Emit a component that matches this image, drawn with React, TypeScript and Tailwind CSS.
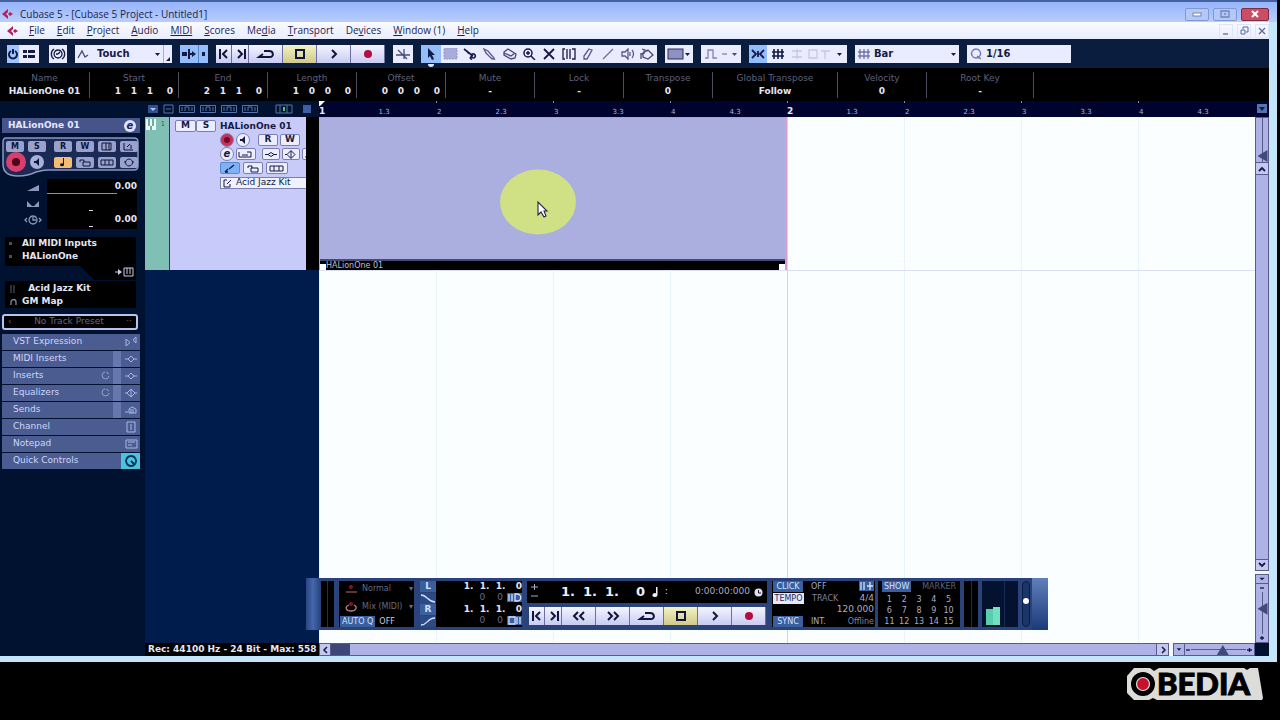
import React, { useState } from 'react';
import clsx from 'clsx';

type GlyphProps = {
  d?: string;
  fill?: string;
  w?: number;
  h?: number;
  sw?: number;
  className?: string;
  children?: React.ReactNode;
};

// Small line drawing, `d` is stroked and `fill` is filled
const Glyph: React.FC<GlyphProps> = ({ d, fill, w = 16, h = 12, sw = 1.3, className, children }) => (
  <svg width={w} height={h} viewBox={`0 0 ${w} ${h}`} className={clsx('shrink-0', className)} aria-hidden="true">
    {d && <path d={d} fill="none" stroke="currentColor" strokeWidth={sw} />}
    {fill && <path d={fill} fill="currentColor" />}
    {children}
  </svg>
);

const CubaseLogo: React.FC = () => (
  <Glyph w={12} h={10} className="text-[#b5205e]" fill="M6 0 0 5l6 5V7L4 5l2-2zM8 3l3 2-3 2-2-2z" />
);

const menus = [
  ['', 'F', 'ile'],
  ['', 'E', 'dit'],
  ['', 'P', 'roject'],
  ['', 'A', 'udio'],
  ['', 'MIDI', ''],
  ['', 'S', 'cores'],
  ['Me', 'd', 'ia'],
  ['', 'T', 'ransport'],
  ['De', 'v', 'ices'],
  ['', 'W', 'indow (1)'],
  ['', 'H', 'elp'],
];

const paths = {
  start: 'M3 1v10M10 2 6 6l4 4',
  end: 'M11 1v10M4 2l4 4-4 4',
  cycle: 'M7 6 3 9h11c4 0 4-6-1-6H8',
  play: 'M6 2l4 4-4 4',
  rewind: 'M7 2 3 6l4 4M13 2 9 6l4 4',
  forward: 'M3 2l4 4-4 4M9 2l4 4-4 4',
};

const TransportKeys: React.FC<{ winding?: boolean }> = ({ winding = false }) => {
  const key = 'flex h-[18px] items-center justify-center border-r border-[#6b70a0] bg-linear-to-b from-[#f4f5ff] to-[#c9cbf2] text-[#10163a]';
  return (
    <div className="flex">
      <button aria-label="Previous marker" className={clsx(key, 'w-4')}><Glyph w={13} d={paths.start} sw={2} /></button>
      <button aria-label="Next marker" className={clsx(key, 'w-[17px]')}><Glyph w={13} d={paths.end} sw={2} /></button>
      {winding && (
        <>
          <button aria-label="Rewind" className={clsx(key, 'w-[34px]')}><Glyph d={paths.rewind} sw={2} /></button>
          <button aria-label="Forward" className={clsx(key, 'w-[34px]')}><Glyph d={paths.forward} sw={2} /></button>
        </>
      )}
      <button aria-label="Cycle" className={clsx(key, 'w-[34px]')}><Glyph w={20} d={paths.cycle} sw={2} /></button>
      <button aria-label="Stop" className="flex h-[18px] w-[34px] items-center justify-center border-r border-[#6b70a0] bg-linear-to-b from-[#f5f2c4] to-[#cfc98c] text-[#10163a]">
        <Glyph d="M4 2h8v8H4z" sw={2} />
      </button>
      <button aria-label="Play" className={clsx(key, 'w-[34px]')}><Glyph d={paths.play} sw={2} /></button>
      <button aria-label="Record" className={clsx(key, 'w-[34px]')}>
        <Glyph><circle cx="8" cy="6" r="4" fill="#b00f3f" /></Glyph>
      </button>
    </div>
  );
};

const tools = [
  { name: 'Range Selection', el: <Glyph><rect x="1" y="0" width="13" height="11" fill="#a9abd8" stroke="#9599c8" strokeDasharray="2 1" /></Glyph> },
  { name: 'Split', el: <Glyph d="M2 1l9 7M5 4l5 3M12 6a2 2 0 1 0 1 3 2 2 0 0 0-1-3M9 9a1 1 0 1 0 1 2" sw={1.6} /> },
  { name: 'Glue', el: <Glyph className="text-[#555a88]" d="M2 1l4 2 6 7-2 1-6-6zM11 10l2 2" /> },
  { name: 'Erase', el: <Glyph className="text-[#454a78]" d="M2 4l4-3 8 5-1 4-4 1-7-4zM2 5l7 3 4-3" /> },
  { name: 'Zoom', el: <Glyph d="M11 5a4 4 0 1 1-8 0 4 4 0 0 1 8 0M10 8l4 4M5 5h4M7 3v4" sw={1.5} /> },
  { name: 'Mute', el: <Glyph d="M3 1l10 10M13 1 3 11" sw={1.8} /> },
  { name: 'Time Warp', el: <Glyph d="M4 1H2v10h2M6 1v10M9 1v10M11 1h3v10h-3" /> },
  { name: 'Draw', el: <Glyph className="text-[#555a88]" d="M9 1l3 1-5 9-3 0 0-3z" /> },
  { name: 'Line', el: <Glyph className="text-[#6a6f9c]" d="M3 11 13 1" /> },
  { name: 'Play Tool', el: <Glyph className="text-[#555a88]" d="M2 4h3l3-3v10L5 8H2zM10 4v4M12 2c2 2 2 6 0 8" /> },
  { name: 'Color', el: <Glyph className="text-[#454a78]" d="M4 5l5-3 5 5-5 4-5-2zM3 1l6 2M5 1v5M2 5v6M2 6l3-1" /> },
];

const Toolbar: React.FC = () => {
  const [tool, setTool] = useState('Object Selection');
  return (
    <div className="flex h-[29px] items-center gap-2 bg-[#0b1d3f] pl-[7px] text-[#151b45]">
      <div className="mr-0.5 flex h-[18px] bg-[#e9ebff]">
        <button aria-label="Activate project" className="flex w-3 items-center justify-center bg-[#9fc4ff]">
          <Glyph w={12} d="M4 3a4 4 0 1 0 4 0M6 1v5" sw={2} />
        </button>
        <button aria-label="Delay compensation" className="flex w-5 items-center justify-center">
          <Glyph fill="M2 2h4v3H2zM7 2h7v3H7zM2 7h4v3H2zM7 7h7v3H7z" />
        </button>
      </div>
      <button aria-label="Setup" className="flex h-[18px] w-[18px] items-center justify-center bg-[#e9ebff]">
        <Glyph d="M4 1a6 6 0 0 0 0 10M12 1a6 6 0 0 1 0 10M8 2a4 4 0 1 0 .1 0M8 6l2-2M6 6h2" />
      </button>
      <div className="flex h-[18px] bg-[#e9ebff]">
        <label className="flex w-[88px] items-center pl-0.5">
          <Glyph className="text-[#454a78]" d="M1 10l4-7 3 6 3-2" />
          <select aria-label="Automation mode" className="min-w-0 flex-1 appearance-none pl-1 font-[DejaVu_Sans,sans-serif] text-[10px] leading-3 font-bold outline-none">
            <option>Touch</option>
            <option>Latch</option>
          </select>
          <Glyph w={10} fill="M2 5h5L4.500 8z" />
        </label>
        <button aria-label="Automation panel" className="flex w-[9px] items-end border-l border-[#a9addb]"><Glyph w={8} h={8} fill="M6 2v4H2z" /></button>
      </div>
      <div className="flex h-[18px] bg-[#93bdfb]">
        <button aria-label="Auto scroll" className="flex w-[18px] items-center justify-center"><Glyph fill="M1 4h5v4H1zM7 1h2v10H7zM9 5h2V3l4 3-4 3V7H9z" /></button>
        <button aria-label="Suspend scroll" className="flex w-2.5 items-center justify-center border-l border-[#5d83c4]"><Glyph w={8} fill="M2 4h3v4H2z" /></button>
      </div>
      <TransportKeys />
      <button aria-label="Crosshair" className="flex h-[18px] w-5 items-center justify-center bg-[#e9ebff]">
        <Glyph className="text-[#454a78]" d="M1 7h14M9 1v10M3 2l9 9" />
      </button>
      <div className="flex h-[18px] w-[236px] bg-[#e9ebff]">
        <button
          aria-label="Object Selection"
          onClick={() => setTool('Object Selection')}
          className={clsx('relative flex flex-1 items-center justify-center', tool === 'Object Selection' && 'bg-[#93bdfb]')}
        >
          <Glyph fill="M5 0v10l2-2 2 4 2-1-2-4h3z" />
          <span className="absolute -bottom-1 h-[3px] w-1.5 rounded-b-full bg-[#dfe4ff]" />
        </button>
        {tools.map(t => (
          <button key={t.name} aria-label={t.name} onClick={() => setTool(t.name)} className={clsx('flex flex-1 items-center justify-center', tool === t.name && 'bg-[#93bdfb]')}>
            {t.el}
          </button>
        ))}
      </div>
      <button aria-label="Color menu" className="flex h-[18px] w-7 items-center justify-center bg-[#e9ebff]">
        <Glyph w={18}><rect x="1" y="1" width="15" height="10" fill="#8e92c2" stroke="#2a2f5c" /></Glyph>
        <Glyph w={6} fill="M0 5h5L2.500 8z" />
      </button>
      <button aria-label="Nudge" className="flex h-[18px] w-10 items-center justify-center gap-1 bg-[#e9ebff] text-[#8084b0]">
        <Glyph w={14} d="M1 10h3V2h5v8h4" />
        <Glyph w={6} d="M0 6h5" />
        <Glyph w={6} className="text-[#454a78]" fill="M0 5h5L2.500 8z" />
      </button>
      <div className="flex h-[18px] w-[98px] bg-[#e9ebff]">
        <button aria-label="Snap" className="flex w-[18px] items-center justify-center bg-[#93bdfb]"><Glyph d="M2 2l4 4-4 4M14 2l-4 4 4 4M8 3v6" sw={1.8} /></button>
        <button aria-label="Snap type" className="flex flex-1 items-center justify-between px-1">
          <Glyph d="M3 1v10M7 1v10M11 1v10M1 4h12M1 8h12" sw={1.6} />
          <Glyph w={42} className="text-[#c4c7e6]" d="M1 3h10M1 9h10M6 1v10M18 2h8v8h-8zM30 3h9M34 3v8" />
          <Glyph w={6} fill="M0 5h5L2.500 8z" />
        </button>
      </div>
      <label className="flex h-[18px] w-[104px] items-center bg-[#e9ebff] pl-0.5">
        <Glyph className="text-[#7175a8]" d="M3 1v10M7 1v10M11 1v10M1 4h12M1 8h12" />
        <select aria-label="Grid type" className="min-w-0 flex-1 appearance-none pl-px font-[DejaVu_Sans,sans-serif] text-[10px] leading-3 font-bold outline-none">
          <option>Bar</option>
          <option>Beat</option>
        </select>
        <Glyph w={10} fill="M2 5h5L4.500 8z" />
      </label>
      <label className="flex h-[18px] w-[104px] items-center bg-[#e9ebff] pl-0.5">
        <Glyph className="text-[#7175a8]" d="M7 1a4.500 4.500 0 1 0 .1 0M8 8l4 3" />
        <select aria-label="Quantize" className="min-w-0 flex-1 appearance-none pl-px font-[DejaVu_Sans,sans-serif] text-[10px] leading-3 font-bold outline-none">
          <option>1/16</option>
          <option>1/8</option>
        </select>
      </label>
    </div>
  );
};

const infoCells = [
  { label: 'Name', value: 'HALionOne 01', width: 'w-[90px]' },
  { label: 'Start', value: '1 1 1 0', width: 'w-[89px]' },
  { label: 'End', value: '2 1 1 0', width: 'w-[89px]' },
  { label: 'Length', value: '1 0 0 0', width: 'w-[89px]' },
  { label: 'Offset', value: '0 0 0 0', width: 'w-[89px]' },
  { label: 'Mute', value: '-', width: 'w-[89px]' },
  { label: 'Lock', value: '-', width: 'w-[89px]' },
  { label: 'Transpose', value: '0', width: 'w-[89px]' },
  { label: 'Global Transpose', value: 'Follow', width: 'w-[125px]' },
  { label: 'Velocity', value: '0', width: 'w-[89px]' },
  { label: 'Root Key', value: '-', width: 'w-[107px]' },
];

const InfoLine: React.FC = () => (
  <dl className="flex h-[33px] items-start bg-black pt-1">
    {infoCells.map(cell => (
      <div key={cell.label} className={clsx('flex h-[26px] flex-col border-r border-[#4b4d60] text-[9px] whitespace-nowrap', cell.width)}>
        <dt className="text-center leading-3 text-[#5f617a]">{cell.label}</dt>
        {/^\d \d/.test(cell.value) ? (
          <dd className="flex justify-end leading-[14px] font-bold text-[#e4e5f5]">
            {cell.value.split(' ').map((n, i) => (
              <span key={i} className={clsx('w-4 text-center', i === 3 && 'ml-1')}>{n}</span>
            ))}
          </dd>
        ) : (
          <dd className="text-center leading-[14px] font-bold text-[#e4e5f5]">{cell.value}</dd>
        )}
      </div>
    ))}
  </dl>
);

const tabs = [
  { name: 'VST Expression', icon: 'M2 3v7l4-3.500zM12 1v6L9 4z' },
  { name: 'MIDI Inserts', icon: 'M1 6h3M4 6l3-3 3 3-3 3zM10 6h3', slot: true },
  { name: 'Inserts', icon: 'M1 6h3M4 6l3-3 3 3-3 3zM10 6h3', slot: true, bypass: true },
  { name: 'Equalizers', icon: 'M1 6h2M3 6l4-4 4 4-4 4zM11 6h2M7 2v8', slot: true, bypass: true },
  { name: 'Sends', icon: 'M1 8h3M5 9V5l3-2 4 2v4zM7 5v4M9 5v4', slot: true },
  { name: 'Channel', icon: 'M3 1h8v10H3zM7 3v6' },
  { name: 'Notepad', icon: 'M2 2h11v8H2zM4 4h7M4 7h4' },
  { name: 'Quick Controls', icon: 'M7 1a5 5 0 1 0 .1 0M7 6l3 3', active: true },
];

const smallKey = 'flex h-[11px] items-center justify-center rounded-[2px] bg-[#98a2cc] text-[8px] font-bold text-[#10163a]';

const Inspector: React.FC = () => (
  <aside className="flex w-[145px] shrink-0 flex-col bg-[#00122f] pt-[17px] pr-[5px] pl-0.5">
    <header className="flex h-[15px] items-center justify-between bg-[#465489] pr-1 pl-1.5 text-[9px] font-bold text-[#e4e8ff]">
      HALionOne 01
      <button aria-label="Edit instrument" className="flex size-3 items-center justify-center rounded-full bg-[#dfe3ff] text-[10px] leading-none text-[#1c2858] italic">e</button>
    </header>

    <div className="relative mt-1 h-10">
      <svg className="absolute inset-0" width="138" height="40" viewBox="0 0 138 40" aria-hidden="true">
        <path d="M4 1h128q4 0 4 4v24q0 4-4 4H46q-5 0-12 2-8 4-18 4Q1 39 1 27V5q0-4 3-4z" fill="#1b2a55" stroke="#8a96c4" strokeWidth="1.500" />
      </svg>
      <div className="relative flex gap-1 pt-1 pl-1">
        <button className={clsx(smallKey, 'w-[18px]')}>M</button>
        <button className={clsx(smallKey, 'w-[18px]')}>S</button>
        <button className={clsx(smallKey, 'ml-1 w-[18px]')}>R</button>
        <button className={clsx(smallKey, 'w-[18px]')}>W</button>
        <button aria-label="Show layer" className={clsx(smallKey, 'w-[18px]')}><Glyph w={14} h={9} d="M2 1h9v7H2zM6 1v7M9 1v7" sw={1} /></button>
        <button aria-label="Input transformer" className={clsx(smallKey, 'w-[18px]')}><Glyph w={14} h={9} d="M2 1v7h9M5 5l3-3M9 3v4" sw={1} /></button>
      </div>
      <div className="relative flex items-center gap-1 pl-1">
        <button aria-label="Record enable" className="flex size-5 items-center justify-center rounded-full bg-[#d93f6c]">
          <span className="size-2 rounded-full bg-[#4d0218]" />
        </button>
        <button aria-label="Monitor" className="flex size-3.5 items-center justify-center rounded-full bg-[#a7b0d8] text-[#10163a]"><Glyph w={8} h={8} fill="M1 3h2l3-3v8L3 5H1z" /></button>
        <button aria-label="Toggle timebase" className="ml-1.5 flex h-[11px] w-[18px] items-center justify-center rounded-[2px] bg-[#f3bd78] text-[#10163a]"><Glyph w={8} h={9} fill="M4 0h1v7a2 1.500 0 1 1-1-1.500z" /></button>
        <button aria-label="Lock" className={clsx(smallKey, 'w-[18px]')}><Glyph w={14} h={9} d="M2 4V2h4v2M5 4h7v4H5z" sw={1} /></button>
        <button aria-label="Lanes" className={clsx(smallKey, 'w-[18px]')}><Glyph w={14} h={9} d="M1 2h12v5H1zM5 2v5M9 2v5" sw={1} /></button>
        <button aria-label="Freeze" className={clsx(smallKey, 'w-[18px]')}><Glyph w={14} h={9} d="M7 1a3.500 3.500 0 1 0 .1 0M2 4h2M10 4h2" sw={1} /></button>
      </div>
    </div>

    <div className="mt-0.5 flex">
      <div className="flex w-[45px] flex-col items-center gap-1.5 pt-1 pl-4 text-[#8d97bd]">
        <Glyph h={10} fill="M2 8l12-6v6z" />
        <Glyph h={10} fill="M2 2l5 5H2zM14 2l-5 5h5zM2 7h12v1H2z" />
        <Glyph h={10} w={20} d="M4 3 2 5l2 2M16 3l2 2-2 2M10 1a4 4 0 1 0 .1 0M10 2v3h3" />
      </div>
      <div className="flex h-[50px] w-[90px] flex-col bg-black text-right text-[9px] leading-[14px] font-bold text-[#e4e5f5]">
        <span>0.00</span>
        <span className="h-px w-[70px] bg-[#5da9a0]" />
        <span className="mt-4 ml-[42px] h-px w-1 bg-[#d7d9ee]" />
        <span className="mt-px">0.00</span>
        <span className="ml-[42px] h-px w-1 bg-[#d7d9ee]" />
      </div>
    </div>

    <div className="mt-2 flex w-[134px] flex-col items-end">
      <ul className="h-[29px] w-[131px] bg-black text-[9px] leading-[13px] font-bold text-[#e4e5f5]">
        <li className="flex items-center gap-2 pl-1"><span className="size-[3px] bg-[#4b4d60]" /><span className="pl-0.5">All MIDI Inputs</span></li>
        <li className="flex items-center gap-2 pl-1"><span className="size-[3px] bg-[#4b4d60]" /><span className="pl-0.5">HALionOne</span></li>
      </ul>
      <div className="mb-px flex h-3.5 w-14 justify-end bg-black text-[#c9cdea] [clip-path:polygon(0_0,100%_0,100%_100%,14px_100%)]">
        <Glyph w={26} d="M5 6h6M14 2h9v8h-9zM17 2v6M20 2v6" fill="M8 3l4 3-4 3z" sw={1} />
      </div>
    </div>
    <ul className="ml-[3px] h-[27px] w-[131px] bg-black pt-px text-[9px] leading-[13px] font-bold text-[#e4e5f5]">
      <li className="flex items-center gap-2 pl-1"><Glyph w={8} h={8} className="text-[#44465a]" d="M2 0v8M5 0v8" />&nbsp;Acid Jazz Kit</li>
      <li className="flex items-center gap-1 pl-1"><Glyph w={9} h={8} className="text-[#8083a0]" d="M2 7V4a2.500 2.500 0 0 1 5 0v3" />GM Map</li>
    </ul>

    <button className="mt-1.5 flex h-4 w-[136px] items-center justify-between rounded-[3px] border-2 border-[#b9c2ee] bg-black px-1 text-[9px] text-[#66687e]">
      <span>‹</span>
      <span>No Track Preset</span>
      <span>··</span>
    </button>

    <nav className="mt-1 flex flex-col gap-px">
      {tabs.map(tab => (
        <button key={tab.name} className="flex h-4 items-stretch bg-[#4b5c91] text-left text-[9px] text-[#cdd6fb]">
          <span className="flex flex-1 items-center pl-[11px]">{tab.name}</span>
          {tab.bypass && <Glyph w={14} h={16} className="text-[#8fa0d2]" d="M6 4a3.500 3.500 0 1 0 4 4M7 4l3 2" sw={1} />}
          {tab.slot && <span className="w-2 bg-[#6577ad]" />}
          <span className={clsx('flex w-[19px] items-center justify-center', tab.active ? 'bg-[#4cc3de] text-[#06345a]' : 'text-[#a9b6e4]')}>
            <Glyph w={14} d={tab.icon} sw={tab.active ? 1.8 : 1} />
          </span>
        </button>
      ))}
    </nav>
  </aside>
);

const trackKey = 'flex h-3 items-center justify-center rounded-[2px] border border-[#7a7fae] bg-[#eceeff] text-[9px] font-bold text-[#151b45]';

const TrackList: React.FC = () => (
  <section className="flex w-[174px] shrink-0 flex-col bg-[#001c4c]">
    <div className="flex h-4 items-center gap-1 bg-[#00122f] pl-0.5 text-[#5672ab]">
      <Glyph w={12} h={10} fill="M1 1h10v8H1z" className="text-[#31508c]"><path d="M3 4h6L6 7z" fill="#a9c4f8" /></Glyph>
      <Glyph w={12} h={10} d="M1 1h9v8H1zM3 5h5" sw={1} />
      {[0, 1, 2, 3].map(i => (
        <Glyph key={i} w={17} h={10} d="M0.500 1.500h15v7H.5zM3 3v4M6 7V3h4v4M13 3v4" sw={1} />
      ))}
      <Glyph w={19} h={10} className="ml-3" d="M1 1h16v8H1zM5 1v8M12 1v8" sw={1}><path d="M8 3h2v4H8z" fill="#4bc66f" /></Glyph>
      <Glyph w={10} h={10} className="ml-1 text-[#3d5fa5]" fill="M1 1h8v8H1z" />
    </div>
    <div className="flex h-[153px] bg-black">
      <div className="flex w-[25px] justify-between border-r border-[#2c3560] bg-[#80bfb4] pt-0.5 pr-1 text-[7px]">
        <Glyph w={12} h={12} fill="M1 0h10v11H1z" className="text-[#e6fff8]"><path d="M4 0v7M8 0v7M6 7v4" stroke="#4e8c86" strokeWidth="1.500" /></Glyph>
        <span className="text-[#2f5f66]">1</span>
      </div>
      <div className="flex w-[136px] flex-col bg-[#c8cbfa] pt-[3px] text-[#151b45]">
        <div className="flex items-center pl-[5px]">
          <button className={clsx(trackKey, 'w-[21px]')}>M</button>
          <button className={clsx(trackKey, 'mr-1 w-5')}>S</button>
          <span className="text-[9px] leading-3 font-bold whitespace-nowrap">HALionOne 01</span>
        </div>
        <div className="ml-[50px] flex flex-col overflow-hidden pt-px">
          <div className="flex items-center gap-0.5">
            <button aria-label="Record enable track" className="flex size-3.5 items-center justify-center rounded-full border border-[#8a8fbb] bg-[#c8305c]"><span className="size-1.5 rounded-full bg-[#72082a]" /></button>
            <button aria-label="Monitor track" className="mr-1.5 flex size-3.5 items-center justify-center rounded-full border border-[#7a7fae] bg-[#eceeff]"><Glyph w={8} h={8} fill="M1 3h2l3-3v8L3 5H1z" /></button>
            <button className={clsx(trackKey, 'w-5')}>R</button>
            <button className={clsx(trackKey, 'w-5')}>W</button>
          </div>
          <div className="flex items-center gap-0.5">
            <button aria-label="Edit channel" className="flex size-3.5 shrink-0 items-center justify-center rounded-full border border-[#7a7fae] bg-[#eceeff] text-[10px] leading-none font-bold italic">e</button>
            <button aria-label="Open instrument" className={clsx(trackKey, 'mr-1 w-5 shrink-0')}><Glyph h={9} d="M1 2v5h12V2H9M4 5h6" sw={1} /></button>
            <button aria-label="Bypass inserts" className={clsx(trackKey, 'w-[18px] shrink-0')}><Glyph h={9} d="M2 4.500h3l3-2 3 2-3 2-3-2M11 4.500h3" sw={1} /></button>
            <button aria-label="Bypass EQ" className={clsx(trackKey, 'w-[18px] shrink-0')}><Glyph h={9} d="M2 4.500h2l4-4 4 4-4 4-4-4M8 1v7" sw={1} /></button>
            <button aria-label="Bypass sends" className={clsx(trackKey, 'w-[18px] shrink-0')}><Glyph h={9} d="M2 7h3M6 7V4l3-2 3 2v3z" sw={1} /></button>
          </div>
          <div className="flex h-3.5 items-center gap-[3px]">
            <button aria-label="Drum map" className="flex h-3 w-5 items-center justify-center rounded-[2px] border border-[#5b87cf] bg-[#7db2f7]"><Glyph h={9} d="M3 8l3-3M7 5l5-4M3 8h3" /></button>
            <button aria-label="Lock track" className={clsx(trackKey, 'w-5')}><Glyph h={9} d="M3 4V2h4v2M6 4h7v4H6z" sw={1} /></button>
            <button aria-label="Lane display" className={clsx(trackKey, 'w-[22px]')}><Glyph h={9} d="M1 2h13v5H1zM5 2v5M10 2v5" sw={1} /></button>
          </div>
          <button className="mt-0.5 flex h-3 w-full items-center gap-1 border border-r-0 border-[#7a7fae] bg-[#eff1ff] pl-0.5 text-[9px] whitespace-nowrap">
            <Glyph w={9} h={9} d="M4 1H1v7h6V5M4 5l4-4" sw={1} />Acid Jazz Kit
          </button>
        </div>
      </div>
    </div>
    <div className="flex-1" />
    <p className="h-[13px] overflow-hidden bg-black pl-[3px] text-[9px] leading-[13px] font-bold whitespace-nowrap text-[#e4e5f5]">Rec: 44100 Hz - 24 Bit - Max: 558</p>
  </section>
);

const beats = ['1', '1.3', '2', '2.3', '3', '3.3', '4', '4.3'];

const Arrange: React.FC = () => (
  <section className="flex min-w-0 flex-1 flex-col">
    <div className="relative grid h-4 grid-cols-16 bg-[#00032e] text-[7px] text-[#aeb4dc]">
      <Glyph w={6} h={6} className="absolute top-0 left-0 text-white" fill="M0 0h6L1 5H0z" />
      {[1, 2].map(bar =>
        beats.map((beat, i) => (
          <span key={`${bar}-${beat}`} className={clsx('flex items-end', i % 2 === 0 && 'bg-linear-to-b from-[#8388b5] from-10% to-transparent to-10% bg-[length:1px_100%] bg-no-repeat')}>
            {i === 0 ? <b className="text-[9px] leading-[11px] text-[#e4e9ff]">{bar}</b> : <span className="pl-px leading-[10px]">{beat}</span>}
          </span>
        ))
      )}
    </div>

    <div className="relative flex flex-1 flex-col bg-[#fbfeff]">
      <div className="absolute inset-0 grid grid-cols-8">
        {[0, 1, 2, 3, 4, 5, 6, 7].map(i => (
          <span key={i} className={clsx('border-l', i === 4 ? 'border-[#ccd3ee]' : 'border-[#e9f4fb]')} />
        ))}
      </div>
      <div className="relative flex h-[154px] border-b border-[#dbe0f2]">
        <div className="relative flex w-1/2 flex-col border-t border-r-2 border-l border-t-[#c595cf] border-r-[#d99bd4] border-l-[#6ec7e0] bg-[#aaafe0]">
          <div className="flex-1" />
          <div className="flex h-[11px] items-end justify-between border-t-2 border-[#454a70] bg-black">
            <span className="size-1.5 bg-white" />
            <span className="flex-1 text-[8px] leading-[9px] text-[#bcbfd6]">HALionOne 01</span>
            <span className="size-1.5 bg-white" />
          </div>
          {/* highlighted mouse pointer */}
          <svg className="absolute top-[51px] left-[180px]" width="77" height="66" viewBox="0 0 77 66" aria-hidden="true">
            <ellipse cx="38" cy="33" rx="38" ry="32.500" fill="#d0e085" />
            <path d="M38 33v13l3-3 3 5 2-1-2-5h3z" fill="#fff" stroke="#22243c" strokeWidth="1.100" />
          </svg>
        </div>
      </div>
    </div>

    <div className="flex h-[13px] bg-[#f4f8ff] text-[#151b45]">
      <button aria-label="Scroll left" className="flex w-3 items-center justify-center border border-[#575c8c] bg-[#c4c7f0]"><Glyph w={8} h={8} d="M6 1 3 4l3 3" sw={1.5} /></button>
      <div className="flex-1 border-y border-[#575c8c] bg-[#aeb2e6]"><div className="h-full w-[19px] bg-[#3d4878]" /></div>
      <button aria-label="Scroll right" className="mr-1 flex w-[13px] items-center justify-center border border-[#575c8c] bg-[#c4c7f0]"><Glyph w={8} h={8} d="M3 1l3 3-3 3" sw={1.5} /></button>
      <div className="flex w-[82px] items-center border border-[#575c8c] bg-[#aeb2e6]">
        <Glyph w={11} h={11} fill="M3 4h5L5.500 7z" className="border-r border-[#575c8c]" />
        <Glyph w={6} h={8} d="M1 4h4" />
        <input
          type="range"
          aria-label="Horizontal zoom"
          defaultValue={60}
          className="h-[11px] min-w-0 flex-1 appearance-none bg-transparent [&::-webkit-slider-runnable-track]:h-px [&::-webkit-slider-runnable-track]:bg-[#575c8c] [&::-webkit-slider-thumb]:-mt-1 [&::-webkit-slider-thumb]:h-2.5 [&::-webkit-slider-thumb]:w-3 [&::-webkit-slider-thumb]:appearance-none [&::-webkit-slider-thumb]:bg-[#3f4c7a] [&::-webkit-slider-thumb]:[clip-path:polygon(50%_0,100%_100%,0_100%)]"
        />
        <Glyph w={8} h={8} d="M1 4h5M3.500 2v4" />
      </div>
    </div>
  </section>
);

const verticalRange =
  'w-3 min-h-0 flex-1 appearance-none bg-transparent [writing-mode:vertical-lr] [&::-webkit-slider-runnable-track]:w-px [&::-webkit-slider-runnable-track]:bg-[#575c8c] [&::-webkit-slider-thumb]:-ml-1 [&::-webkit-slider-thumb]:h-3 [&::-webkit-slider-thumb]:w-2.5 [&::-webkit-slider-thumb]:appearance-none [&::-webkit-slider-thumb]:bg-[#3f4c7a] [&::-webkit-slider-thumb]:[clip-path:polygon(0_50%,100%_0,100%_100%)]';

const RightRail: React.FC = () => (
  <div className="flex w-3.5 shrink-0 flex-col bg-[#f4f8ff] text-[#151b45]">
    <button aria-label="Split view" className="flex h-4 items-center justify-center bg-[#00032e]">
      <Glyph w={10} h={10} fill="M0 0h10v9H0z" className="text-[#5573ae]"><path d="M2 3h6L5 7z" fill="#0a1c48" /></Glyph>
    </button>
    <div className="flex h-[46px] flex-col items-center border border-[#575c8c] bg-[#aeb2e6]">
      <input type="range" aria-label="Waveform zoom" defaultValue={100} className={verticalRange} />
    </div>
    <button aria-label="Scroll up" className="flex h-3 items-center justify-center border-x border-b border-[#575c8c] bg-[#c4c7f0]"><Glyph w={8} h={8} d="M1 6l3-3 3 3" sw={1.8} /></button>
    <div className="flex-1 border-x border-[#575c8c] bg-[#aeb2e6]" />
    <button aria-label="Scroll down" className="mb-[3px] flex h-3 items-center justify-center border border-[#575c8c] bg-[#c4c7f0]"><Glyph w={8} h={8} d="M1 2l3 3 3-3" sw={1.8} /></button>
    <div className="flex h-[69px] flex-col items-center border border-[#575c8c] bg-[#aeb2e6]">
      <Glyph w={12} h={9} fill="M3 3h6L6 6z" className="border-b border-[#575c8c]" />
      <Glyph w={6} h={8} d="M1 4h4" />
      <input type="range" aria-label="Vertical zoom" defaultValue={36} className={verticalRange} />
      <Glyph w={6} h={8} d="M1 4h4M3 2v4" />
    </div>
    <div className="h-[13px] bg-[#00122f]" />
  </div>
);

const badge = 'bg-[#3a5f9f] px-0.5 text-[#d5e2ff]';

const Locator: React.FC<{ side: string; punch: string; pre: string; icon: string }> = ({ side, punch, pre, icon }) => (
  <div className="flex h-[23px]">
    <div className="flex w-4 flex-col gap-px text-[9px] leading-[11px] font-bold text-[#d5e2ff]">
      <span className="h-[11px] bg-[#3a5f9f] text-center">{side}</span>
      <Glyph h={11} d={punch} className="bg-[#2c4a83]" />
    </div>
    <div className="flex w-[86px] flex-col bg-black text-[9px] leading-[11px] font-bold text-[#e4e5f5]">
      <div className="flex justify-end"><span className="w-4">1.</span><span className="w-4">1.</span><span className="w-5">1.</span><span>0</span></div>
      <div className="flex items-center justify-end gap-3 font-normal text-[#686b82]"><span>{pre}</span><span className="flex items-center gap-1">{pre}<Glyph w={15} h={9} d={icon} className="bg-[#3a5f9f] text-[#d5e2ff]" /></span></div>
    </div>
  </div>
);

const TransportPanel: React.FC = () => (
  <section aria-label="Transport panel" className="absolute bottom-[26px] left-[306px] flex h-[52px] items-stretch bg-[#2a437a] py-[3px] text-[9px] text-[#a9adc6]">
    <div className="-my-[3px] w-3.5 bg-linear-to-r from-[#28457f] via-[#4568ab] to-[#28457f]" />
    <div className="ml-px flex w-[13px] gap-px bg-[#1c2f5c]"><span className="flex-1 bg-black" /><span className="flex-1 bg-black" /></div>

    <div className="ml-[5px] flex w-[75px] flex-col justify-between bg-black px-px text-[8px] text-[#686b82]">
      <button className="flex h-4 items-center gap-1 pl-1">
        <Glyph w={14} d="M2 9h11" className="text-[#8a5560]"><circle cx="7" cy="4" r="2" fill="#8b1020" /></Glyph>
        <span className="flex-1 text-left">Normal</span><span>▾</span>
      </button>
      <button className="flex h-4 items-center gap-1 pl-1">
        <Glyph w={14} d="M5 4C0 6 2 10 7 10s7-4 3-6" className="text-[#b87a83]"><circle cx="7" cy="3" r="2" fill="#8b1020" /></Glyph>
        <span className="flex-1 text-left whitespace-nowrap">Mix (MIDI)</span><span>▾</span>
      </button>
      <div className="flex gap-1 leading-[11px]"><button className={badge}>AUTO Q</button><span className="text-[#c9cbe0]">OFF</span></div>
    </div>

    <div className="ml-1.5 flex flex-col">
      <Locator side="L" punch="M1 2c6 0 7 7 14 7" pre="0" icon="M2 1v7M5 1v7M8 1v7h2c5 0 5-7 0-7z" />
      <Locator side="R" punch="M1 9c7 0 6-7 14-7" pre="0" icon="M2 1h6v7H2zM10 1v7M13 1v7" />
    </div>

    <div className="ml-[5px] flex w-[240px] flex-col justify-between">
      <div className="flex h-[22px] items-center bg-black pl-1 text-[13px] font-bold text-[#eeeffa]">
        <Glyph w={8} h={18} d="M0 4h7M3.500 1v6M0 13h7" className="text-[#a9adc6]" sw={1} />
        <div className="flex flex-1 pl-[22px]"><span className="w-[22px]">1.</span><span className="w-[22px]">1.</span><span className="w-[31px]">1.</span><span>0</span></div>
        <div className="flex w-[118px] items-center gap-1 pr-1 text-[9px] font-normal">
          <Glyph w={12} fill="M7 1h1.500v8a2.500 2 0 1 1-1.500-1.800z" />
          <span className="text-[8px]">:</span>
          <span className="flex-1 text-right text-[#a9adc6]">0:00:00:000</span>
          <Glyph w={9} h={9}><circle cx="4.500" cy="4.500" r="4" fill="#dfe1f3" /><path d="M4.500 2v3H7" stroke="#10163a" fill="none" /></Glyph>
        </div>
      </div>
      <div className="pb-0.5 pl-0.5"><TransportKeys winding /></div>
    </div>

    <div className="ml-[5px] flex w-[103px] flex-col justify-between bg-black px-px text-[8px] leading-[11px]">
      <div className="flex gap-1"><button className={clsx(badge, 'w-[30px]')}>CLICK</button><span className="flex-1 pl-1">OFF</span><Glyph w={15} h={10} d="M2 1v8M5 1v8M11 1v8M8 5h6" className="bg-[#3a5f9f] text-[#d5e2ff]" /></div>
      <div className="flex gap-1"><button className="w-[31px] bg-[#e4e8ff] text-center text-[#1b2858]">TEMPO</button><span className="flex-1 pl-1 text-[#7f829c]">TRACK</span><span className="text-[9px]">4/4</span></div>
      <div className="text-right text-[9px]">120.000</div>
      <div className="flex gap-1"><button className={clsx(badge, 'w-[30px]')}>SYNC</button><span className="flex-1 pl-1">INT.</span><span className="text-[#7f829c]">Offline</span></div>
    </div>

    <div className="ml-[3px] flex w-[82px] flex-col justify-between bg-black px-1 text-[8px] leading-[11px]">
      <div className="flex justify-between"><button className={badge}>SHOW</button><span className="text-[#5f6279]">MARKER</span></div>
      <div className="grid grid-cols-5 text-center">
        {Array.from({ length: 15 }, (_, i) => <button key={i}>{i + 1}</button>)}
      </div>
    </div>

    <div className="ml-1 flex w-3.5 gap-px bg-[#1c2f5c]"><span className="flex-1 bg-black" /><span className="flex-1 bg-black" /></div>
    <div className="ml-1 flex w-9 gap-px bg-[#152a55]">
      <div className="flex flex-1 items-end bg-[#04122f] px-1 pb-0.5"><span className="h-4 flex-1 bg-[#57cfae]" /><span className="h-[18px] flex-1 bg-[#6fe0c0]" /></div>
      <div className="flex-1 bg-[#04122f]" />
    </div>
    <div className="ml-1 flex w-2 flex-col items-center rounded-full border border-[#0a1c48] bg-[#1c3569] pt-4"><span className="size-1.5 rounded-full bg-white" /></div>
    <div className="-my-[3px] ml-0.5 w-4 bg-linear-to-b from-[#6080bb] to-[#1d3a78]" />
  </section>
);

const App: React.FC = () => (
  <div className="flex min-h-screen flex-col bg-black font-[DejaVu_Sans,sans-serif]">
    <div className="mr-[3px] flex flex-1 flex-col border-r-8 border-b-[6px] border-[#c3e6fa]">
      <header className="-mr-2 flex h-[22px] items-center gap-1 border-t-2 border-[#46629c] bg-linear-to-b from-[#95b4fa] to-[#b9cdfc] pt-1 pr-2 pl-0.5 font-[Open_Sans,sans-serif] text-[10px] text-[#1b2350]">
        <CubaseLogo />
        <h1 className="flex-1 pl-0.5">Cubase 5 - [Cubase 5 Project - Untitled1]</h1>
        <button aria-label="Minimize" className="flex h-[13px] w-6 items-center justify-center rounded-[2px] border border-[#8098d0] bg-[#b4c8f8] text-[#7384b5]"><Glyph h={10}><rect x="4" y="4" width="8" height="3" fill="#fff" stroke="#7384b5" /></Glyph></button>
        <button aria-label="Maximize" className="flex h-[13px] w-6 items-center justify-center rounded-[2px] border border-[#8098d0] bg-[#b4c8f8] text-[#7384b5]"><Glyph d="M4 2h8v6H4zM7 5h2" h={10} /></button>
        <button aria-label="Close" className="flex h-[13px] w-7 items-center justify-center rounded-[2px] border border-[#7d2c46] bg-[#cb4c63] text-white"><Glyph d="M5 2l6 6M11 2 5 8" h={10} sw={2} /></button>
      </header>
      <nav className="flex h-[17px] items-center gap-3 bg-linear-to-b from-[#f9fbff] to-[#e8edff] pl-[7px] font-[Open_Sans,sans-serif] text-[10px] text-[#1b2350]">
        <CubaseLogo />
        <div className="-ml-0.5 flex flex-1 gap-3">
          {menus.map(([pre, key, post]) => (
            <button key={pre + key + post}>{pre}<u>{key}</u>{post}</button>
          ))}
        </div>
        <div className="flex gap-1 text-[#59699b]">
          <button aria-label="Minimize project" className="border border-[#dfe4f8]"><Glyph w={12} d="M3 9h5" /></button>
          <button aria-label="Restore project" className="border border-[#dfe4f8]"><Glyph w={12} d="M3 5h4v4H3zM5 4V2h5v5H8" sw={1} /></button>
          <button aria-label="Close project" className="border border-[#dfe4f8]"><Glyph w={12} d="M3 3l6 6M9 3 3 9" /></button>
        </div>
      </nav>
      <Toolbar />
      <InfoLine />
      <main className="relative flex flex-1">
        <Inspector />
        <TrackList />
        <Arrange />
        <RightRail />
        <TransportPanel />
      </main>
    </div>
    <footer className="flex h-[58px] items-start justify-end pr-3">
      <a href="#obedia" aria-label="Obedia">
        <svg width="142" height="48" viewBox="0 0 142 48">
          <path d="M8 6h16l4 3 5-3h85l3 2 3-2h8l5 30-1 2H31l-4-2-4 2H8l-7-7V14z" fill="#dcdcd8" />
          <circle cx="17" cy="22" r="12" fill="#000" />
          <circle cx="17" cy="22" r="6.500" fill="#c8102e" stroke="#dcdcd8" strokeWidth="1.200" />
          <text x="31" y="33" className="fill-black stroke-black stroke-1 font-[Lato,sans-serif] text-[31px] font-black">BEDIA</text>
        </svg>
      </a>
    </footer>
  </div>
);

export default App;
